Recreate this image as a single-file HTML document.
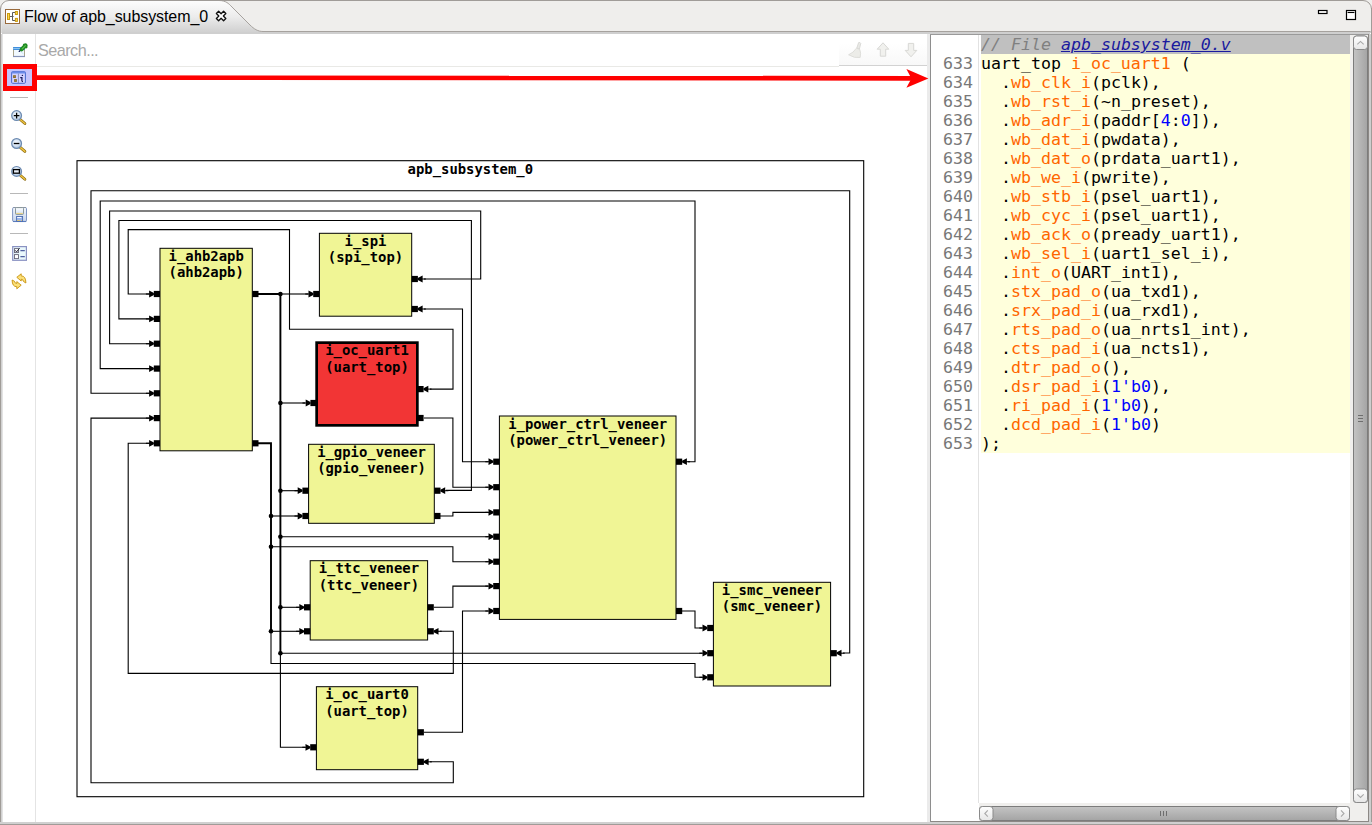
<!DOCTYPE html>
<html lang="en">
<head>
<meta charset="utf-8">
<title>Flow of apb_subsystem_0</title>
<style>
html,body{margin:0;padding:0;}
body{width:1372px;height:825px;overflow:hidden;background:#fff;position:relative;font-family:"Liberation Sans","DejaVu Sans",sans-serif;}
.abs{position:absolute;}
#top{left:0;top:0;width:1372px;height:33px;background:#efeeec;}
#frame{left:0;top:0;width:1370px;height:823px;border:1px solid #a09c98;border-radius:9px 9px 0 0;box-sizing:content-box;pointer-events:none;}
#tabtxt{left:24px;top:6.6px;font-size:16px;line-height:20px;color:#000;white-space:nowrap;letter-spacing:-0.08px;}
#search{left:38px;top:39.6px;font-size:16.2px;letter-spacing:-0.52px;line-height:20px;color:#a8a8a8;white-space:nowrap;}
#code{left:931px;top:35px;width:419px;height:768px;background:#fff;overflow:hidden;font-family:"DejaVu Sans Mono","Liberation Mono",monospace;font-size:16.6px;}
.ln{height:19px;line-height:19px;white-space:pre;position:relative;}
.ln .no{position:absolute;left:0;top:0;width:42px;text-align:right;color:#787878;}
.ln .tx{position:absolute;left:50px;top:0;width:369px;height:19px;background:#ffffdc;color:#000;}
.ln.hdr .tx{background:#c0c0c0;}
.cm{color:#808080;font-style:italic;}
.lk{color:#1a1a9e;font-style:italic;text-decoration:underline;}
.o{color:#ff6600;}
.b{color:#0000ff;}
</style>
</head>
<body>
<div id="top" class="abs"></div>

<!-- tab + chrome -->
<svg class="abs" style="left:0;top:0" width="1372" height="36" viewBox="0 0 1372 36">
  <defs>
    <linearGradient id="tabg" x1="0" y1="0" x2="0" y2="1">
      <stop offset="0" stop-color="#fdfdfd"/><stop offset="0.5" stop-color="#ececec"/><stop offset="1" stop-color="#cfcfcf"/>
    </linearGradient>
  </defs>
  <path d="M1.5,33 V9 Q1.5,0.5 9,0.5 H219 C226,0.5 229,4 231,6 L250,25 C254,29 258,31.5 263,31.5 H1372 V33 Z" fill="url(#tabg)"/>
  <path d="M219,0.5 C226,0.5 229,4 231,6 L250,25 C254,29 258,31.5 263,31.5 H1370.5" fill="none" stroke="#a6a29e" stroke-width="1"/>
  <rect x="2" y="32" width="1368" height="2" fill="#cfcfcf"/>
  <!-- tab icon -->
  <rect x="5.5" y="9.5" width="14" height="14" fill="#fff" stroke="#996a3c" stroke-width="1"/>
  <path d="M10,16.5 H13.6 M12.5,12.5 V20.5 M12.5,12.5 H15 M12.5,20.5 H15" stroke="#5a5a5a" stroke-width="1" fill="none"/>
  <rect x="7.5" y="13.5" width="2" height="6" fill="#ffd84a" stroke="#c89a10" stroke-width="1"/>
  <rect x="15.4" y="11.5" width="2" height="3" fill="#ffd84a" stroke="#c89a10" stroke-width="1"/>
  <rect x="15.4" y="18.4" width="2" height="3" fill="#ffd84a" stroke="#c89a10" stroke-width="1"/>
  <!-- close x -->
  <path transform="translate(221.1,16) rotate(45)" d="M-1.6,-5.1 H1.6 V-1.6 H5.1 V1.6 H1.6 V5.1 H-1.6 V1.6 H-5.1 V-1.6 H-1.6 Z" fill="#fff" stroke="#111" stroke-width="1.3" stroke-linejoin="round"/>
  <!-- min / max -->
  <rect x="1318.5" y="10.5" width="8.5" height="3" fill="#fff" stroke="#000" stroke-width="1.2"/>
  <rect x="1346.5" y="10.5" width="9" height="9" fill="#fff" stroke="#000" stroke-width="1.2"/>
  <path d="M1347.6,12.5 H1354.4" stroke="#000" stroke-width="1.1"/>
</svg>
<div id="tabtxt" class="abs">Flow of apb_subsystem_0</div>

<!-- left toolbar separator and search line -->
<div class="abs" style="left:35px;top:34px;width:1px;height:788px;background:#e4e4e4"></div>
<div class="abs" style="left:36px;top:66px;width:803px;height:1px;background:#e9e9e6"></div>
<div class="abs" style="left:839px;top:34px;width:88px;height:31px;background:linear-gradient(#ffffff 30%,#f8f8f8);border-bottom:1px solid #d2d2d2"></div>
<div id="search" class="abs">Search...</div>
<!-- sash -->
<div class="abs" style="left:927px;top:34px;width:4px;height:788px;background:#ebebeb"></div>

<!-- toolbar icons -->
<svg class="abs" style="left:0;top:34px" width="36" height="270" viewBox="0 34 36 270">
  <defs><linearGradient id="savg" x1="0" y1="0" x2="0" y2="1"><stop offset="0" stop-color="#f4f7fc"/><stop offset="1" stop-color="#c6d4ec"/></linearGradient><linearGradient id="lblg" x1="0" y1="0" x2="0" y2="1"><stop offset="0" stop-color="#ffffff"/><stop offset="1" stop-color="#cfe0f6"/></linearGradient><radialGradient id="lens" cx="0.45" cy="0.4" r="0.6"><stop offset="0" stop-color="#f2f7fd"/><stop offset="0.6" stop-color="#d4e2f2"/><stop offset="1" stop-color="#9db8d8"/></radialGradient></defs>
  <!-- pin -->
  <rect x="13.5" y="47.5" width="11" height="9" fill="#f2f9ff" stroke="#a8a48c" stroke-width="1"/>
  <path d="M13,56.5 H25" stroke="#8492b8" stroke-width="1.2"/>
  <rect x="13.2" y="47" width="11.6" height="3" fill="#3f8fde"/>
  <path d="M13.2,48.5 H21" stroke="#9fd0f6" stroke-width="0.8"/>
  <path d="M19.2,51.4 L21,49.8" stroke="#14205a" stroke-width="1.3" stroke-linecap="round"/>
  <path d="M21,51.6 L23.5,54.2" stroke="#bfe0f6" stroke-width="0.8"/>
  <path d="M21.6,49.4 L25.6,45.4" stroke="#1f8a22" stroke-width="4" stroke-linecap="round"/>
  <path d="M24.2,45 L26.2,47" stroke="#1f8a22" stroke-width="2.6" stroke-linecap="round"/>
  <path d="M22.2,48.8 L25.4,45.6" stroke="#58c04e" stroke-width="1.2" stroke-linecap="round"/>
  <!-- separators -->
  <path d="M10,97.5 H28 M10,193.5 H28 M10,233.5 H28" stroke="#b8b8b8" stroke-width="1"/>
  <!-- zoom icons -->
  <g id="zin">
    <path d="M20.2,119.5 L24.9,123.5" stroke="#8a6a10" stroke-width="2.8" stroke-linecap="round"/>
    <path d="M20.2,119.5 L24.9,123.5" stroke="#f0c440" stroke-width="1.4" stroke-linecap="round"/>
    <circle cx="16.6" cy="115.6" r="4.9" fill="url(#lens)" stroke="#6c8ab0" stroke-width="1.2"/>
    <path d="M13.8,115.6 H19.4 M16.6,112.8 V118.4" stroke="#000" stroke-width="1.3"/>
  </g>
  <g>
    <path d="M20.2,147.4 L24.9,151.4" stroke="#8a6a10" stroke-width="2.8" stroke-linecap="round"/>
    <path d="M20.2,147.4 L24.9,151.4" stroke="#f0c440" stroke-width="1.4" stroke-linecap="round"/>
    <circle cx="16.6" cy="143.5" r="4.9" fill="url(#lens)" stroke="#6c8ab0" stroke-width="1.2"/>
    <path d="M13.8,143.5 H19.4" stroke="#000" stroke-width="1.3"/>
  </g>
  <g>
    <path d="M20.2,175.3 L24.9,179.3" stroke="#8a6a10" stroke-width="2.8" stroke-linecap="round"/>
    <path d="M20.2,175.3 L24.9,179.3" stroke="#f0c440" stroke-width="1.4" stroke-linecap="round"/>
    <circle cx="16.6" cy="171.4" r="4.9" fill="url(#lens)" stroke="#6c8ab0" stroke-width="1.2"/>
    <rect x="13.4" y="169.6" width="6" height="3.6" fill="#e8eef8" stroke="#000" stroke-width="1.3"/>
  </g>
  <!-- save -->
  <rect x="12.6" y="207.5" width="13.9" height="14" rx="1.2" fill="url(#savg)" stroke="#7f96c4" stroke-width="1"/>
  <path d="M13,221.5 H26.2" stroke="#5a7cbc" stroke-width="1.1"/>
  <path d="M13.2,207.5 H26" stroke="#8a94a4" stroke-width="0.9"/>
  <rect x="15.5" y="207.6" width="8" height="6.8" rx="0.8" fill="url(#lblg)" stroke="#7e8c90" stroke-width="0.9"/>
  <path d="M16.2,213.4 H22.8" stroke="#f0d070" stroke-width="0.9"/>
  <rect x="16.6" y="216.5" width="6" height="5" fill="#9ab6ee" stroke="#4c6cb0" stroke-width="0.9"/>
  <path d="M17.2,217.5 H21.4" stroke="#ffffff" stroke-width="0.9"/>
  <path d="M17.2,220.4 H19.8 M21.2,220.4 H22" stroke="#f0c850" stroke-width="0.9"/>
  <!-- checklist -->
  <rect x="12.7" y="246.6" width="13.7" height="13.7" fill="#e9f8fc" stroke="#8a92c2" stroke-width="1.2"/>
  <rect x="14.5" y="248.6" width="4" height="4" fill="#fff" stroke="#667" stroke-width="0.9"/>
  <rect x="14.5" y="254.6" width="4" height="4" fill="#fff" stroke="#667" stroke-width="0.9"/>
  <path d="M15.2,250.3 l1.4,1.6 l3,-3.8" stroke="#223" stroke-width="1" fill="none"/>
  <path d="M20.4,250.6 H24.8 M20.4,256.6 H24.8" stroke="#5060a0" stroke-width="1.1"/>
  <!-- refresh -->
  <path d="M16.8,277.3 L21.2,273.8 L21.2,275.9 Q25.8,275.8 25.9,283 L23.6,281.6 Q23.2,279.3 21.2,279.2 L21.2,281 Z" fill="#fbe07a" stroke="#c8920c" stroke-width="0.9" stroke-linejoin="round"/>
  <path d="M21.2,285.2 L16.8,288.8 L16.8,286.7 Q12.2,286.8 12.1,280 L14.4,281.2 Q14.8,283.4 16.8,283.5 L16.8,281.6 Z" fill="#fbe07a" stroke="#c8920c" stroke-width="0.9" stroke-linejoin="round"/>
</svg>

<!-- search toolbar icons (disabled) -->
<svg class="abs" style="left:842px;top:38px" width="84" height="24" viewBox="842 38 84 24">
  <path d="M858.6,42.6 q1.6,-0.6 2.2,0.8 l-1.4,5.6 l-2.6,-0.9 Z" fill="#e9e9e6" stroke="#d4d4d0" stroke-width="0.8"/>
  <path d="M856.4,48.2 l3.4,1.2 q1.4,3.6 0.4,8 q-5.6,1.2 -11.6,-2.6 q5,-2.2 7.8,-6.6 Z" fill="#ecece8" stroke="#d8d8d4" stroke-width="0.8"/>
  <path d="M883,42.8 l5.8,6.4 h-3.1 v7 h-5.4 v-7 h-3.1 Z" fill="#f1f1ee" stroke="#d8d8d5" stroke-width="1"/>
  <path d="M911,56.8 l5.8,-6.4 h-3.1 v-7 h-5.4 v7 h-3.1 Z" fill="#f1f1ee" stroke="#d8d8d5" stroke-width="1"/>
</svg>

<!-- diagram -->
<svg class="abs" style="left:0;top:0" width="931" height="825" viewBox="0 0 931 825">
<rect x="77" y="160.7" width="786.7" height="636" fill="none" stroke="#000" stroke-width="1.1"/>
<path d="M149,393.3 H91 V190.7 H849.7 V653 H843" fill="none" stroke="#000" stroke-width="1.1"/>
<path d="M149,368.6 H100.2 V201 H695.0 V461.7 H688" fill="none" stroke="#000" stroke-width="1.1"/>
<path d="M149,343.7 H109.6 V211 H480.7 V279 H424" fill="none" stroke="#000" stroke-width="1.1"/>
<path d="M149,318.9 H118.9 V220.5 H471.4 V490.4 H446" fill="none" stroke="#000" stroke-width="1.1"/>
<path d="M149,294.0 H128.2 V229.6 H289.5 V329.3 H453.0 V389.1 H430" fill="none" stroke="#000" stroke-width="1.1"/>
<path d="M424,309 H462.5 V461.7 H488" fill="none" stroke="#000" stroke-width="1.1"/>
<path d="M424,418 H452.9 V487.2 H488" fill="none" stroke="#000" stroke-width="1.1"/>
<path d="M440,516 H452.9 V512.4 H488" fill="none" stroke="#000" stroke-width="1.1"/>
<path d="M280.4,536.7 H488" fill="none" stroke="#000" stroke-width="1.1"/>
<path d="M271.0,546.7 H452.9 V561.7 H488" fill="none" stroke="#000" stroke-width="1.1"/>
<path d="M434,607.3 H452.9 V586.1 H488" fill="none" stroke="#000" stroke-width="1.1"/>
<path d="M424,732.3 H462.5 V611.0 H488" fill="none" stroke="#000" stroke-width="1.1"/>
<path d="M440,631.3 H453.3 V673.4 H128.2 V443.3 H149" fill="none" stroke="#000" stroke-width="1.1"/>
<path d="M430,761.8 H453.3 V782.7 H91 V418.1 H149" fill="none" stroke="#000" stroke-width="1.1"/>
<path d="M682,611 H695.0 V628 H702" fill="none" stroke="#000" stroke-width="1.1"/>
<path d="M280.4,653.3 H702" fill="none" stroke="#000" stroke-width="1.1"/>
<path d="M271.0,631.3 V663.5 H695.0 V677.3 H702" fill="none" stroke="#000" stroke-width="1.1"/>
<path d="M280.4,294 H308" fill="none" stroke="#000" stroke-width="1.1"/>
<path d="M280.4,403.0 H305" fill="none" stroke="#000" stroke-width="1.1"/>
<path d="M280.4,490.7 H298" fill="none" stroke="#000" stroke-width="1.1"/>
<path d="M280.4,607.3 H299" fill="none" stroke="#000" stroke-width="1.1"/>
<path d="M280.4,653.3 V747.3 H305" fill="none" stroke="#000" stroke-width="1.1"/>
<path d="M271.0,516 H298" fill="none" stroke="#000" stroke-width="1.1"/>
<path d="M271.0,631.3 H299" fill="none" stroke="#000" stroke-width="1.1"/>
<path d="M258,294 H280.4 V653.3" fill="none" stroke="#000" stroke-width="1.9"/>
<path d="M258,443.3 H271.0 V631.3" fill="none" stroke="#000" stroke-width="1.9"/>
<circle cx="280.4" cy="294" r="2.3" fill="#000"/>
<circle cx="280.4" cy="403.0" r="2.3" fill="#000"/>
<circle cx="280.4" cy="490.7" r="2.3" fill="#000"/>
<circle cx="280.4" cy="536.7" r="2.3" fill="#000"/>
<circle cx="280.4" cy="607.3" r="2.3" fill="#000"/>
<circle cx="280.4" cy="653.3" r="2.3" fill="#000"/>
<circle cx="271.0" cy="516" r="2.3" fill="#000"/>
<circle cx="271.0" cy="546.7" r="2.3" fill="#000"/>
<circle cx="271.0" cy="631.3" r="2.3" fill="#000"/>
<rect x="160.0" y="248.3" width="92.3" height="202.5" fill="#f0f595" stroke="#000" stroke-width="1"/>
<rect x="319.4" y="233.3" width="92.3" height="82.9" fill="#f0f595" stroke="#000" stroke-width="1"/>
<rect x="316.65" y="342.65" width="100.7" height="82.7" fill="#f23535" stroke="#000" stroke-width="2.7"/>
<rect x="308.6" y="444.3" width="125.7" height="79.0" fill="#f0f595" stroke="#000" stroke-width="1"/>
<rect x="310.2" y="560.7" width="117.4" height="79.3" fill="#f0f595" stroke="#000" stroke-width="1"/>
<rect x="499.4" y="416.0" width="176.6" height="203.4" fill="#f0f595" stroke="#000" stroke-width="1"/>
<rect x="713.4" y="582.3" width="117.2" height="103.7" fill="#f0f595" stroke="#000" stroke-width="1"/>
<rect x="316.4" y="686.7" width="101.3" height="83.0" fill="#f0f595" stroke="#000" stroke-width="1"/>
<rect x="153.8" y="290.9" width="6.2" height="6.2" fill="#000"/>
<path d="M145.9,294.0 H150.9" fill="none" stroke="#000" stroke-width="1.1"/>
<path d="M153.9,293.1 L149.1,290.6 L149.1,297.4 L153.9,294.9 Z" fill="#000"/>
<rect x="153.8" y="315.8" width="6.2" height="6.2" fill="#000"/>
<path d="M145.9,318.9 H150.9" fill="none" stroke="#000" stroke-width="1.1"/>
<path d="M153.9,318.0 L149.1,315.5 L149.1,322.3 L153.9,319.8 Z" fill="#000"/>
<rect x="153.8" y="340.6" width="6.2" height="6.2" fill="#000"/>
<path d="M145.9,343.7 H150.9" fill="none" stroke="#000" stroke-width="1.1"/>
<path d="M153.9,342.8 L149.1,340.3 L149.1,347.1 L153.9,344.6 Z" fill="#000"/>
<rect x="153.8" y="365.5" width="6.2" height="6.2" fill="#000"/>
<path d="M145.9,368.6 H150.9" fill="none" stroke="#000" stroke-width="1.1"/>
<path d="M153.9,367.7 L149.1,365.2 L149.1,372.0 L153.9,369.5 Z" fill="#000"/>
<rect x="153.8" y="390.2" width="6.2" height="6.2" fill="#000"/>
<path d="M145.9,393.3 H150.9" fill="none" stroke="#000" stroke-width="1.1"/>
<path d="M153.9,392.4 L149.1,389.9 L149.1,396.7 L153.9,394.2 Z" fill="#000"/>
<rect x="153.8" y="415.0" width="6.2" height="6.2" fill="#000"/>
<path d="M145.9,418.1 H150.9" fill="none" stroke="#000" stroke-width="1.1"/>
<path d="M153.9,417.2 L149.1,414.7 L149.1,421.5 L153.9,419.0 Z" fill="#000"/>
<rect x="153.8" y="440.2" width="6.2" height="6.2" fill="#000"/>
<path d="M145.9,443.3 H150.9" fill="none" stroke="#000" stroke-width="1.1"/>
<path d="M153.9,442.4 L149.1,439.9 L149.1,446.7 L153.9,444.2 Z" fill="#000"/>
<rect x="252.3" y="290.9" width="6.2" height="6.2" fill="#000"/>
<rect x="252.3" y="440.2" width="6.2" height="6.2" fill="#000"/>
<rect x="313.2" y="290.9" width="6.2" height="6.2" fill="#000"/>
<path d="M305.3,294 H310.3" fill="none" stroke="#000" stroke-width="1.1"/>
<path d="M313.3,293.1 L308.5,290.6 L308.5,297.4 L313.3,294.9 Z" fill="#000"/>
<rect x="411.7" y="275.9" width="6.2" height="6.2" fill="#000"/>
<path d="M425.8,279 H420.8" fill="none" stroke="#000" stroke-width="1.1"/>
<path d="M417.8,278.1 L422.6,275.6 L422.6,282.4 L417.8,279.9 Z" fill="#000"/>
<rect x="411.7" y="305.9" width="6.2" height="6.2" fill="#000"/>
<path d="M425.8,309 H420.8" fill="none" stroke="#000" stroke-width="1.1"/>
<path d="M417.8,308.1 L422.6,305.6 L422.6,312.4 L417.8,309.9 Z" fill="#000"/>
<rect x="310.4" y="399.9" width="6.2" height="6.2" fill="#000"/>
<path d="M302.5,403.0 H307.5" fill="none" stroke="#000" stroke-width="1.1"/>
<path d="M310.5,402.1 L305.7,399.6 L305.7,406.4 L310.5,403.9 Z" fill="#000"/>
<rect x="417.4" y="386.0" width="6.2" height="6.2" fill="#000"/>
<path d="M431.5,389.1 H426.5" fill="none" stroke="#000" stroke-width="1.1"/>
<path d="M423.5,388.2 L428.3,385.7 L428.3,392.5 L423.5,390.0 Z" fill="#000"/>
<rect x="417.4" y="414.9" width="6.2" height="6.2" fill="#000"/>
<rect x="302.4" y="487.6" width="6.2" height="6.2" fill="#000"/>
<path d="M294.5,490.7 H299.5" fill="none" stroke="#000" stroke-width="1.1"/>
<path d="M302.5,489.8 L297.7,487.3 L297.7,494.1 L302.5,491.6 Z" fill="#000"/>
<rect x="302.4" y="512.9" width="6.2" height="6.2" fill="#000"/>
<path d="M294.5,516 H299.5" fill="none" stroke="#000" stroke-width="1.1"/>
<path d="M302.5,515.1 L297.7,512.6 L297.7,519.4 L302.5,516.9 Z" fill="#000"/>
<rect x="434.3" y="487.6" width="6.2" height="6.2" fill="#000"/>
<path d="M448.4,490.7 H443.4" fill="none" stroke="#000" stroke-width="1.1"/>
<path d="M440.4,489.8 L445.2,487.3 L445.2,494.1 L440.4,491.6 Z" fill="#000"/>
<rect x="434.3" y="512.9" width="6.2" height="6.2" fill="#000"/>
<rect x="304.0" y="604.2" width="6.2" height="6.2" fill="#000"/>
<path d="M296.1,607.3 H301.1" fill="none" stroke="#000" stroke-width="1.1"/>
<path d="M304.1,606.4 L299.3,603.9 L299.3,610.7 L304.1,608.2 Z" fill="#000"/>
<rect x="304.0" y="628.2" width="6.2" height="6.2" fill="#000"/>
<path d="M296.1,631.3 H301.1" fill="none" stroke="#000" stroke-width="1.1"/>
<path d="M304.1,630.4 L299.3,627.9 L299.3,634.7 L304.1,632.2 Z" fill="#000"/>
<rect x="427.6" y="604.2" width="6.2" height="6.2" fill="#000"/>
<rect x="427.6" y="628.2" width="6.2" height="6.2" fill="#000"/>
<path d="M441.7,631.3 H436.7" fill="none" stroke="#000" stroke-width="1.1"/>
<path d="M433.7,630.4 L438.5,627.9 L438.5,634.7 L433.7,632.2 Z" fill="#000"/>
<rect x="493.2" y="458.6" width="6.2" height="6.2" fill="#000"/>
<path d="M485.3,461.7 H490.3" fill="none" stroke="#000" stroke-width="1.1"/>
<path d="M493.3,460.8 L488.5,458.3 L488.5,465.1 L493.3,462.6 Z" fill="#000"/>
<rect x="493.2" y="484.1" width="6.2" height="6.2" fill="#000"/>
<path d="M485.3,487.2 H490.3" fill="none" stroke="#000" stroke-width="1.1"/>
<path d="M493.3,486.3 L488.5,483.8 L488.5,490.6 L493.3,488.1 Z" fill="#000"/>
<rect x="493.2" y="509.3" width="6.2" height="6.2" fill="#000"/>
<path d="M485.3,512.4 H490.3" fill="none" stroke="#000" stroke-width="1.1"/>
<path d="M493.3,511.5 L488.5,509.0 L488.5,515.8 L493.3,513.3 Z" fill="#000"/>
<rect x="493.2" y="533.6" width="6.2" height="6.2" fill="#000"/>
<path d="M485.3,536.7 H490.3" fill="none" stroke="#000" stroke-width="1.1"/>
<path d="M493.3,535.8 L488.5,533.3 L488.5,540.1 L493.3,537.6 Z" fill="#000"/>
<rect x="493.2" y="558.6" width="6.2" height="6.2" fill="#000"/>
<path d="M485.3,561.7 H490.3" fill="none" stroke="#000" stroke-width="1.1"/>
<path d="M493.3,560.8 L488.5,558.3 L488.5,565.1 L493.3,562.6 Z" fill="#000"/>
<rect x="493.2" y="583.0" width="6.2" height="6.2" fill="#000"/>
<path d="M485.3,586.1 H490.3" fill="none" stroke="#000" stroke-width="1.1"/>
<path d="M493.3,585.2 L488.5,582.7 L488.5,589.5 L493.3,587.0 Z" fill="#000"/>
<rect x="493.2" y="607.9" width="6.2" height="6.2" fill="#000"/>
<path d="M485.3,611.0 H490.3" fill="none" stroke="#000" stroke-width="1.1"/>
<path d="M493.3,610.1 L488.5,607.6 L488.5,614.4 L493.3,611.9 Z" fill="#000"/>
<rect x="676.0" y="458.6" width="6.2" height="6.2" fill="#000"/>
<path d="M690.1,461.7 H685.1" fill="none" stroke="#000" stroke-width="1.1"/>
<path d="M682.1,460.8 L686.9,458.3 L686.9,465.1 L682.1,462.6 Z" fill="#000"/>
<rect x="676.0" y="607.9" width="6.2" height="6.2" fill="#000"/>
<rect x="707.2" y="624.9" width="6.2" height="6.2" fill="#000"/>
<path d="M699.3,628 H704.3" fill="none" stroke="#000" stroke-width="1.1"/>
<path d="M707.3,627.1 L702.5,624.6 L702.5,631.4 L707.3,628.9 Z" fill="#000"/>
<rect x="707.2" y="650.1" width="6.2" height="6.2" fill="#000"/>
<path d="M699.3,653.2 H704.3" fill="none" stroke="#000" stroke-width="1.1"/>
<path d="M707.3,652.3 L702.5,649.8 L702.5,656.6 L707.3,654.1 Z" fill="#000"/>
<rect x="707.2" y="674.2" width="6.2" height="6.2" fill="#000"/>
<path d="M699.3,677.3 H704.3" fill="none" stroke="#000" stroke-width="1.1"/>
<path d="M707.3,676.4 L702.5,673.9 L702.5,680.7 L707.3,678.2 Z" fill="#000"/>
<rect x="830.6" y="650.1" width="6.2" height="6.2" fill="#000"/>
<path d="M844.7,653.2 H839.7" fill="none" stroke="#000" stroke-width="1.1"/>
<path d="M836.7,652.3 L841.5,649.8 L841.5,656.6 L836.7,654.1 Z" fill="#000"/>
<rect x="310.2" y="744.2" width="6.2" height="6.2" fill="#000"/>
<path d="M302.3,747.3 H307.3" fill="none" stroke="#000" stroke-width="1.1"/>
<path d="M310.3,746.4 L305.5,743.9 L305.5,750.7 L310.3,748.2 Z" fill="#000"/>
<rect x="417.7" y="729.2" width="6.2" height="6.2" fill="#000"/>
<rect x="417.7" y="758.7" width="6.2" height="6.2" fill="#000"/>
<path d="M431.8,761.8 H426.8" fill="none" stroke="#000" stroke-width="1.1"/>
<path d="M423.8,760.9 L428.6,758.4 L428.6,765.2 L423.8,762.7 Z" fill="#000"/>
<text x="470.3" y="173.7" font-family="DejaVu Sans Mono, Liberation Mono, monospace" font-weight="bold" font-size="13.9" text-anchor="middle" fill="#000">apb_subsystem_0</text>
<text x="206.2" y="261.0" font-family="DejaVu Sans Mono, Liberation Mono, monospace" font-weight="bold" font-size="13.9" text-anchor="middle" fill="#000">i_ahb2apb</text>
<text x="206.2" y="277.2" font-family="DejaVu Sans Mono, Liberation Mono, monospace" font-weight="bold" font-size="13.9" text-anchor="middle" fill="#000">(ahb2apb)</text>
<text x="365.5" y="246.0" font-family="DejaVu Sans Mono, Liberation Mono, monospace" font-weight="bold" font-size="13.9" text-anchor="middle" fill="#000">i_spi</text>
<text x="365.5" y="262.2" font-family="DejaVu Sans Mono, Liberation Mono, monospace" font-weight="bold" font-size="13.9" text-anchor="middle" fill="#000">(spi_top)</text>
<text x="367.0" y="355.3" font-family="DejaVu Sans Mono, Liberation Mono, monospace" font-weight="bold" font-size="13.9" text-anchor="middle" fill="#000">i_oc_uart1</text>
<text x="367.0" y="371.5" font-family="DejaVu Sans Mono, Liberation Mono, monospace" font-weight="bold" font-size="13.9" text-anchor="middle" fill="#000">(uart_top)</text>
<text x="371.5" y="457.0" font-family="DejaVu Sans Mono, Liberation Mono, monospace" font-weight="bold" font-size="13.9" text-anchor="middle" fill="#000">i_gpio_veneer</text>
<text x="371.5" y="473.2" font-family="DejaVu Sans Mono, Liberation Mono, monospace" font-weight="bold" font-size="13.9" text-anchor="middle" fill="#000">(gpio_veneer)</text>
<text x="368.9" y="573.4" font-family="DejaVu Sans Mono, Liberation Mono, monospace" font-weight="bold" font-size="13.9" text-anchor="middle" fill="#000">i_ttc_veneer</text>
<text x="368.9" y="589.6" font-family="DejaVu Sans Mono, Liberation Mono, monospace" font-weight="bold" font-size="13.9" text-anchor="middle" fill="#000">(ttc_veneer)</text>
<text x="587.7" y="428.7" font-family="DejaVu Sans Mono, Liberation Mono, monospace" font-weight="bold" font-size="13.9" text-anchor="middle" fill="#000">i_power_ctrl_veneer</text>
<text x="587.7" y="444.9" font-family="DejaVu Sans Mono, Liberation Mono, monospace" font-weight="bold" font-size="13.9" text-anchor="middle" fill="#000">(power_ctrl_veneer)</text>
<text x="772.0" y="595.0" font-family="DejaVu Sans Mono, Liberation Mono, monospace" font-weight="bold" font-size="13.9" text-anchor="middle" fill="#000">i_smc_veneer</text>
<text x="772.0" y="611.2" font-family="DejaVu Sans Mono, Liberation Mono, monospace" font-weight="bold" font-size="13.9" text-anchor="middle" fill="#000">(smc_veneer)</text>
<text x="367.0" y="699.4" font-family="DejaVu Sans Mono, Liberation Mono, monospace" font-weight="bold" font-size="13.9" text-anchor="middle" fill="#000">i_oc_uart0</text>
<text x="367.0" y="715.6" font-family="DejaVu Sans Mono, Liberation Mono, monospace" font-weight="bold" font-size="13.9" text-anchor="middle" fill="#000">(uart_top)</text>
</svg>

<!-- red highlight + arrow -->
<div class="abs" style="left:2px;top:64px;width:25px;height:17px;border:5px solid #ff0000;background:#c4c4fb"></div>
<svg class="abs" style="left:0;top:60px" width="931" height="34" viewBox="0 60 931 34">
  <path d="M36,77.55 L915,78.35" stroke="#ff0000" stroke-width="4.7" fill="none"/>
  <path d="M928.4,78.4 L906.4,69.1 L911.4,78.4 L906.4,87.7 Z" fill="#ff0000"/>
  <!-- tree/info icon -->
  <rect x="11.6" y="71.7" width="13.8" height="11.6" rx="1" fill="#d2d2ff" stroke="#4668cc" stroke-width="1"/>
  <path d="M11.6,72.6 H25.4" stroke="#6a8ae8" stroke-width="1.8"/>
  <path d="M18.4,73.6 V83.2" stroke="#8088b8" stroke-width="0.9"/>
  <rect x="13.6" y="75.7" width="1.8" height="1.8" fill="#efe6c4" stroke="#8b6b2b" stroke-width="1"/>
  <rect x="14.6" y="79.6" width="1.8" height="1.8" fill="#efe6c4" stroke="#8b6b2b" stroke-width="1"/>
  <circle cx="22.4" cy="75.4" r="0.7" fill="#1a1a5a"/>
  <path d="M20.2,77.6 H21.9 V80.8 Q22,81.6 23,81.6" stroke="#1a1a5a" stroke-width="1.2" fill="none"/>
</svg>

<!-- right code panel -->
<div class="abs" style="left:930px;top:34px;width:438px;height:787px;background:#f0efed"></div>
<div class="abs" style="left:931px;top:35px;width:48px;height:786px;background:#fff"></div>
<div class="abs" style="left:930px;top:821px;width:439px;height:1px;background:#8c8885"></div>
<div class="abs" style="left:1368px;top:34px;width:1px;height:788px;background:#8c8885"></div>
<div class="abs" style="left:930px;top:34px;width:1px;height:788px;background:#8e8e8e"></div>
<div class="abs" style="left:930px;top:34px;width:438px;height:1px;background:#9a9a9a"></div>
<div id="code" class="abs">
<div class="abs" style="left:47px;top:0;width:1px;height:768px;background:#e2e2e2"></div>
<div class="ln hdr"><span class="no"></span><span class="tx"><span class="cm">// File </span><span class="lk">apb_subsystem_0.v</span></span></div>
<div class="ln"><span class="no">633</span><span class="tx">uart_top <span class="o">i_oc_uart1</span> (</span></div>
<div class="ln"><span class="no">634</span><span class="tx">  .<span class="o">wb_clk_i</span>(pclk),</span></div>
<div class="ln"><span class="no">635</span><span class="tx">  .<span class="o">wb_rst_i</span>(~n_preset),</span></div>
<div class="ln"><span class="no">636</span><span class="tx">  .<span class="o">wb_adr_i</span>(paddr[<span class="b">4</span>:<span class="b">0</span>]),</span></div>
<div class="ln"><span class="no">637</span><span class="tx">  .<span class="o">wb_dat_i</span>(pwdata),</span></div>
<div class="ln"><span class="no">638</span><span class="tx">  .<span class="o">wb_dat_o</span>(prdata_uart1),</span></div>
<div class="ln"><span class="no">639</span><span class="tx">  .<span class="o">wb_we_i</span>(pwrite),</span></div>
<div class="ln"><span class="no">640</span><span class="tx">  .<span class="o">wb_stb_i</span>(psel_uart1),</span></div>
<div class="ln"><span class="no">641</span><span class="tx">  .<span class="o">wb_cyc_i</span>(psel_uart1),</span></div>
<div class="ln"><span class="no">642</span><span class="tx">  .<span class="o">wb_ack_o</span>(pready_uart1),</span></div>
<div class="ln"><span class="no">643</span><span class="tx">  .<span class="o">wb_sel_i</span>(uart1_sel_i),</span></div>
<div class="ln"><span class="no">644</span><span class="tx">  .<span class="o">int_o</span>(UART_int1),</span></div>
<div class="ln"><span class="no">645</span><span class="tx">  .<span class="o">stx_pad_o</span>(ua_txd1),</span></div>
<div class="ln"><span class="no">646</span><span class="tx">  .<span class="o">srx_pad_i</span>(ua_rxd1),</span></div>
<div class="ln"><span class="no">647</span><span class="tx">  .<span class="o">rts_pad_o</span>(ua_nrts1_int),</span></div>
<div class="ln"><span class="no">648</span><span class="tx">  .<span class="o">cts_pad_i</span>(ua_ncts1),</span></div>
<div class="ln"><span class="no">649</span><span class="tx">  .<span class="o">dtr_pad_o</span>(),</span></div>
<div class="ln"><span class="no">650</span><span class="tx">  .<span class="o">dsr_pad_i</span>(<span class="b">1'b0</span>),</span></div>
<div class="ln"><span class="no">651</span><span class="tx">  .<span class="o">ri_pad_i</span>(<span class="b">1'b0</span>),</span></div>
<div class="ln"><span class="no">652</span><span class="tx">  .<span class="o">dcd_pad_i</span>(<span class="b">1'b0</span>)</span></div>
<div class="ln"><span class="no">653</span><span class="tx">);</span></div>
</div>

<!-- scrollbars -->
<svg class="abs" style="left:975px;top:34px" width="397" height="791" viewBox="975 34 397 791">
  <defs>
    <linearGradient id="vtr" x1="0" y1="0" x2="1" y2="0">
      <stop offset="0" stop-color="#c4c4c4"/><stop offset="1" stop-color="#a4a4a4"/>
    </linearGradient>
    <linearGradient id="htr" x1="0" y1="0" x2="0" y2="1">
      <stop offset="0" stop-color="#c4c4c4"/><stop offset="1" stop-color="#a4a4a4"/>
    </linearGradient>
    <linearGradient id="btn" x1="0" y1="0" x2="0" y2="1">
      <stop offset="0" stop-color="#ffffff"/><stop offset="1" stop-color="#e6e6e6"/>
    </linearGradient>
  </defs>
  <!-- vertical -->
  <rect x="1353.5" y="36" width="14" height="766.5" rx="3" fill="url(#vtr)" stroke="#7c7c7c" stroke-width="1"/>
  <rect x="1353.5" y="36" width="14" height="13.5" rx="3" fill="url(#btn)" stroke="#8a8a8a" stroke-width="1"/>
  <rect x="1353.5" y="789" width="14" height="13.5" rx="3" fill="url(#btn)" stroke="#8a8a8a" stroke-width="1"/>
  <path d="M1357.3,44.4 L1360.5,41.4 L1363.7,44.4" stroke="#a8a8a8" stroke-width="1.1" fill="none"/>
  <path d="M1357.3,794.4 L1360.5,797.4 L1363.7,794.4" stroke="#a8a8a8" stroke-width="1.1" fill="none"/>
  <path d="M1358,415.5 H1363 M1358,418.5 H1363 M1358,421.5 H1363" stroke="#6e6e6e" stroke-width="1"/>
  <!-- horizontal -->
  <rect x="979.5" y="806.5" width="370" height="14" rx="3" fill="url(#htr)" stroke="#7c7c7c" stroke-width="1"/>
  <rect x="979.5" y="806.5" width="13.5" height="14" rx="3" fill="url(#btn)" stroke="#8a8a8a" stroke-width="1"/>
  <rect x="1336" y="806.5" width="13.5" height="14" rx="3" fill="url(#btn)" stroke="#8a8a8a" stroke-width="1"/>
  <path d="M987.8,810.3 L984.8,813.5 L987.8,816.7" stroke="#a8a8a8" stroke-width="1.1" fill="none"/>
  <path d="M1341,810.3 L1344,813.5 L1341,816.7" stroke="#a8a8a8" stroke-width="1.1" fill="none"/>
  <path d="M1160.5,811 V816 M1163.5,811 V816 M1166.5,811 V816" stroke="#6e6e6e" stroke-width="1"/>
</svg>

<!-- window edges -->
<div id="frame" class="abs"></div>
<div class="abs" style="left:0;top:8px;width:1px;height:817px;background:#a09c98"></div>
<div class="abs" style="left:1px;top:34px;width:2px;height:789px;background:linear-gradient(90deg,#c8c8c8,#ececec)"></div>
<div class="abs" style="left:1369px;top:34px;width:2px;height:789px;background:#cdcdcd"></div>
<div class="abs" style="left:1371px;top:8px;width:1px;height:817px;background:#a09c98"></div>
<div class="abs" style="left:0;top:822px;width:1372px;height:2px;background:#d0d0d0"></div>
<div class="abs" style="left:0;top:824px;width:1372px;height:1px;background:#a09c98"></div>
</body>
</html>
